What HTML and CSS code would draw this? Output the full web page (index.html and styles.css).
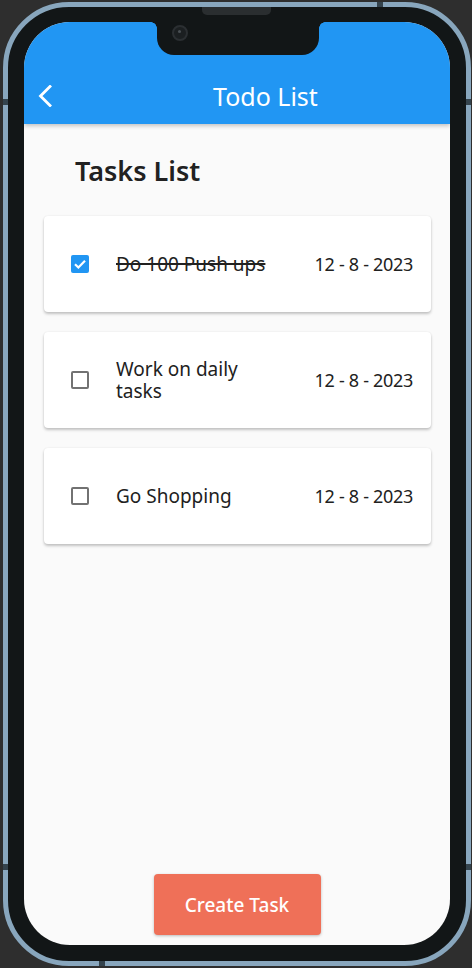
FILE: index.html
```html
<!DOCTYPE html>
<html lang="en">
<head>
<meta charset="utf-8">
<title>Todo List</title>
<link rel="stylesheet" href="styles.css">
</head>
<body>
<div class="device">
  <span class="mark mark-top"></span>
  <span class="mark mark-bottom"></span>
  <span class="mark mark-left-a"></span>
  <span class="mark mark-left-b"></span>
  <span class="mark mark-right-a"></span>
  <span class="mark mark-right-b"></span>
  <span class="speaker"></span>
  <div class="screen">
    <div class="notch"><span class="camera"></span></div>
    <header class="appbar">
      <div class="toolbar">
        <svg class="back" width="16" height="22" viewBox="0 0 16 22" aria-hidden="true">
          <polyline points="12,1.5 2.5,11 12,20.5" fill="none" stroke="#fff" stroke-width="2.8" stroke-linecap="square" stroke-linejoin="miter"/>
        </svg>
        <h1 class="title">Todo List</h1>
      </div>
    </header>
    <main class="content">
      <h2 class="heading">Tasks List</h2>
      <ul class="tasks">
        <li class="card">
          <span class="check checked">
            <svg width="18" height="18" viewBox="0 0 18 18" aria-hidden="true"><polyline points="4,9.2 7.4,12.5 14,5.8" fill="none" stroke="#fff" stroke-width="2.2"/></svg>
          </span>
          <span class="task-name done">Do 100 Push ups</span>
          <span class="task-date">12 - 8 - 2023</span>
        </li>
        <li class="card">
          <span class="check"></span>
          <span class="task-name">Work on daily tasks</span>
          <span class="task-date">12 - 8 - 2023</span>
        </li>
        <li class="card">
          <span class="check"></span>
          <span class="task-name">Go Shopping</span>
          <span class="task-date">12 - 8 - 2023</span>
        </li>
      </ul>
    </main>
    <footer class="footer">
      <button class="create" type="button">Create Task</button>
    </footer>
  </div>
</div>
</body>
</html>
```

FILE: styles.css
```css
* { box-sizing: border-box; }

html, body {
  margin: 0;
  padding: 0;
  background: #2e2e2e;
}

body {
  font-family: "Noto Sans", "Open Sans", sans-serif;
  width: 472px;
  height: 968px;
  overflow: hidden;
}

.device {
  position: relative;
  margin: 2px 0 0 3px;
  width: 468px;
  height: 964px;
  border: 5px solid #88a6bd;
  border-radius: 66px;
  background: #121617;
  padding: 15px 16px 16px 16px;
}

.mark {
  position: absolute;
  background: #34434d;
}
.mark-top { top: -5px; left: 369px; width: 6px; height: 5px; }
.mark-bottom { bottom: -5px; left: 91px; width: 6px; height: 5px; }
.mark-left-a { left: -5px; top: 92px; width: 5px; height: 6px; }
.mark-left-b { left: -5px; top: 857px; width: 5px; height: 6px; }
.mark-right-a { right: -5px; top: 92px; width: 5px; height: 6px; }
.mark-right-b { right: -5px; top: 857px; width: 5px; height: 6px; }

.speaker {
  position: absolute;
  top: 0;
  left: 194px;
  width: 69px;
  height: 8px;
  background: #2a2e30;
  border-radius: 0 0 5px 5px;
}

.screen {
  position: relative;
  height: 100%;
  border-radius: 46px;
  overflow: hidden;
  background: #fafafa;
  display: flex;
  flex-direction: column;
}

.notch {
  position: absolute;
  top: 0;
  left: 133px;
  width: 162px;
  height: 33px;
  background: #121617;
  border-radius: 0 0 17px 17px;
  z-index: 5;
}
.notch::before,
.notch::after {
  content: "";
  position: absolute;
  top: 0;
  width: 6px;
  height: 6px;
}
.notch::before {
  left: -6px;
  background: radial-gradient(circle at 0 100%, transparent 5.5px, #121617 6px);
}
.notch::after {
  right: -6px;
  background: radial-gradient(circle at 100% 100%, transparent 5.5px, #121617 6px);
}

.camera {
  position: absolute;
  left: 15px;
  top: 3px;
  width: 16px;
  height: 16px;
  border-radius: 50%;
  background: #1b1f21;
  border: 2px solid #2b2f32;
}
.camera::after {
  content: "";
  position: absolute;
  left: 4px;
  top: 3px;
  width: 3px;
  height: 3px;
  border-radius: 50%;
  background: #4a5054;
}

.appbar {
  position: relative;
  z-index: 2;
  height: 102px;
  background: #2196f3;
  padding-top: 46px;
  box-shadow: 0 2px 4px rgba(0, 0, 0, 0.22);
  flex-shrink: 0;
}

.toolbar {
  height: 56px;
  display: flex;
  align-items: center;
  padding-left: 14px;
}

.back { display: block; }

.title {
  margin: 0 0 0 159px;
  font-size: 25px;
  font-weight: 400;
  color: #fff;
  line-height: 30px;
}

.content {
  flex: 1;
  padding: 30px 19px 0 20px;
}

.heading {
  margin: 0 0 28px 31px;
  font-size: 27px;
  line-height: 34px;
  font-weight: 600;
  color: #212121;
}

.tasks {
  list-style: none;
  margin: 0;
  padding: 0;
  display: flex;
  flex-direction: column;
  gap: 20px;
}

.card {
  height: 96px;
  background: #fff;
  border-radius: 4px;
  box-shadow: 0 2px 3px rgba(0, 0, 0, 0.22), 0 0 2px rgba(0, 0, 0, 0.08);
  display: flex;
  align-items: center;
  padding: 0 18px 0 27px;
}

.check {
  width: 18px;
  height: 18px;
  border: 2px solid #727272;
  border-radius: 2px;
  flex-shrink: 0;
  margin-right: 27px;
}
.check.checked {
  border: none;
  background: #2196f3;
}
.check svg { display: block; }

.task-name {
  flex: 1;
  max-width: 166px;
  font-size: 19px;
  line-height: 22px;
  color: #212121;
}
.task-name.done {
  text-decoration: line-through;
  text-decoration-thickness: 1.5px;
}

.task-date {
  margin-left: auto;
  font-size: 18px;
  letter-spacing: -0.3px;
  color: #212121;
  white-space: nowrap;
}

.footer {
  display: flex;
  justify-content: center;
  padding-bottom: 10px;
}

.create {
  width: 167px;
  height: 61px;
  border: none;
  border-radius: 4px;
  background: #ef7058;
  color: #fff;
  font-family: inherit;
  font-size: 19px;
  font-weight: 500;
  box-shadow: 0 1px 3px rgba(0, 0, 0, 0.25);
}
```
